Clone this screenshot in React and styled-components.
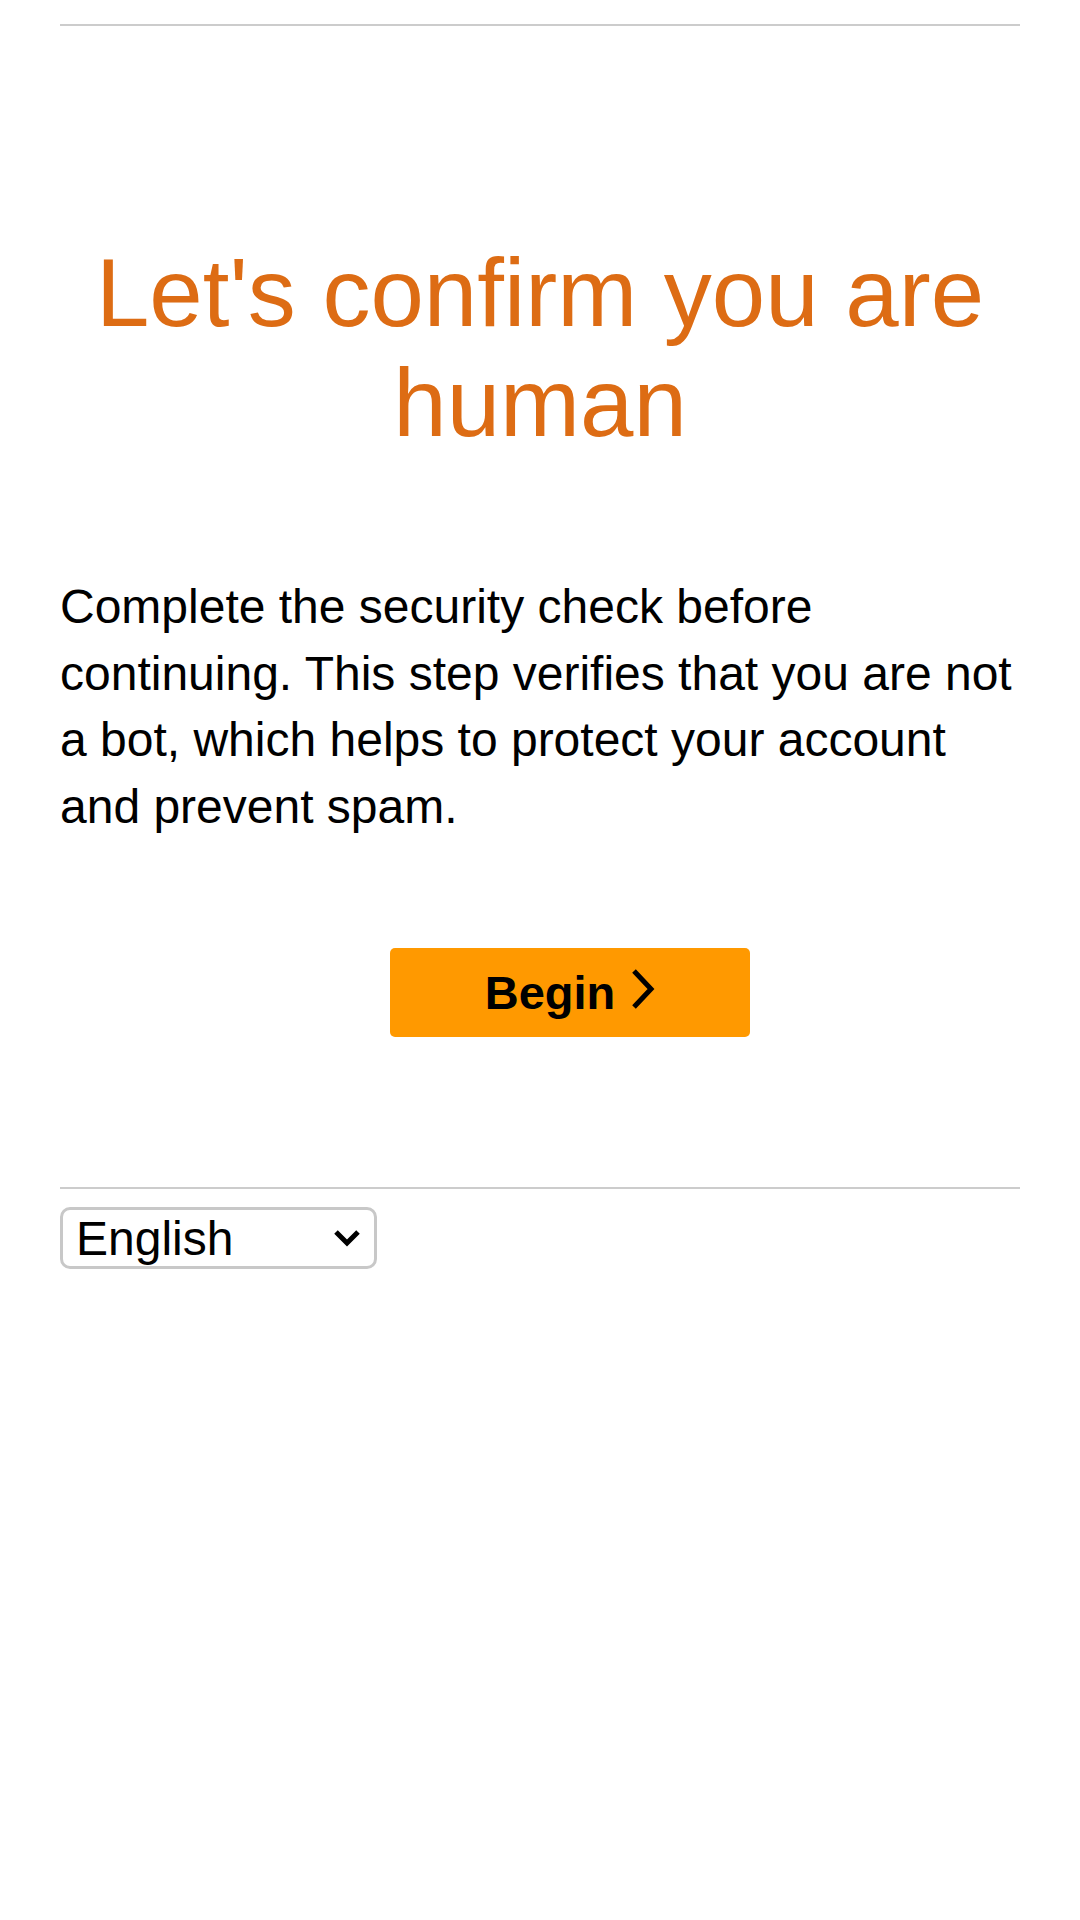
import React from 'react';
import styled, { createGlobalStyle } from 'styled-components';

const GlobalStyle = createGlobalStyle`
  html, body {
    margin: 0;
    padding: 0;
    background: #ffffff;
  }
  body {
    font-family: "Liberation Sans", Arial, sans-serif;
    color: #000000;
  }
`;

const Page = styled.div`
  padding: 24px 60px 0 60px;
`;

const Rule = styled.div`
  height: 2px;
  background: #cccccc;
`;

const Main = styled.main`
  display: flex;
  flex-direction: column;
  padding: ${(p) => p.$pad};
`;

const Title = styled.h1`
  margin: 0;
  font-size: 96px;
  font-weight: normal;
  line-height: normal;
  text-align: center;
  color: #dd6c14;
`;

const Text = styled.p`
  margin: 116px 0 0 0;
  font-size: 48px;
  line-height: 66.5px;
`;

const ButtonRow = styled.div`
  display: flex;
  justify-content: center;
  padding-left: 60px;
  margin-top: 108px;
`;

const BeginButton = styled.button`
  width: 360px;
  height: 89px;
  display: flex;
  align-items: center;
  justify-content: center;
  gap: 16px;
  border: none;
  border-radius: 5px;
  background: #ff9900;
  color: #000000;
  font-family: inherit;
  font-size: 47px;
  font-weight: bold;
  cursor: pointer;
  padding: 0;

  svg {
    margin-top: -8px;
  }
`;

const LangWrap = styled.div`
  position: relative;
  width: 317px;
  margin-top: 18px;
`;

const LangSelect = styled.select`
  appearance: none;
  -webkit-appearance: none;
  width: 317px;
  height: 62px;
  box-sizing: border-box;
  border: 3px solid #c8c8c8;
  border-radius: 10px;
  background: #ffffff;
  padding: 0 0 0 13px;
  font-family: inherit;
  font-size: 48px;
  color: #000000;
`;

const SelectArrow = styled.svg`
  position: absolute;
  right: 15px;
  top: 21px;
  pointer-events: none;
`;

function Chevron() {
  return (
    <svg width="24" height="42" viewBox="0 0 24 42">
      <polyline points="3,3 20,21 3,39" fill="none" stroke="#000" strokeWidth="5" />
    </svg>
  );
}

export default function App() {
  return (
    <Page>
      <GlobalStyle />
      <Rule />
      <Main $pad="212px 0 0 0">
        <Title>Let's confirm you are human</Title>
        <Text>
          Complete the security check before continuing. This step verifies that you are not
          a bot, which helps to protect your account and prevent spam.
        </Text>
        <ButtonRow>
          <BeginButton type="button">
            Begin
            <Chevron />
          </BeginButton>
        </ButtonRow>
      </Main>
      <Main $pad="150px 0 0 0">
        <Rule />
        <LangWrap>
          <LangSelect defaultValue="en">
            <option value="en">English</option>
          </LangSelect>
          <SelectArrow width="30" height="20" viewBox="0 0 30 20">
            <polyline points="4,4 15,15 26,4" fill="none" stroke="#000" strokeWidth="5" />
          </SelectArrow>
        </LangWrap>
      </Main>
    </Page>
  );
}
